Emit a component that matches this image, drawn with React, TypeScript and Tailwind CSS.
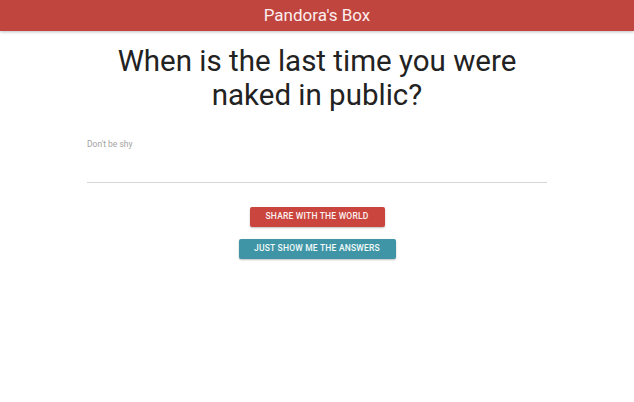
export default function App() {
  return (
    <div className="min-h-screen bg-white font-['Roboto',sans-serif]">
      <header className="flex h-[31px] items-center justify-center bg-[#c1453f] shadow-[0_1px_3px_rgba(0,0,0,0.25)]">
        <h1 className="text-[17px] text-[#fbeeee]">Pandora's Box</h1>
      </header>

      <main className="mx-auto flex w-[460px] flex-col items-center">
        <h2 className="mt-[13px] w-[440px] text-center text-[29.5px] leading-[34px] text-[#222]">
          When is the last time you were naked in public?
        </h2>

        <div className="mt-[26px] w-full">
          <label className="block text-[8.5px] text-[#a3a3a3]">Don't be shy</label>
          <input
            type="text"
            className="mt-[24px] block h-[8px] w-full border-b border-[#d5d5d5] outline-none"
          />
        </div>

        <div className="mt-[24px] flex flex-col items-center gap-[12px]">
          <button
            type="button"
            className="h-[20px] w-[135px] rounded-[2px] bg-[#c9453e] text-[8.5px] font-medium uppercase tracking-[0.2px] text-[#fdf2f2] shadow-[0_1px_2px_rgba(0,0,0,0.25)]"
          >
            Share with the world
          </button>
          <button
            type="button"
            className="h-[20px] w-[157px] rounded-[2px] bg-[#3f95a5] text-[8.5px] font-medium uppercase tracking-[0.2px] text-[#f2fafb] shadow-[0_1px_2px_rgba(0,0,0,0.25)]"
          >
            Just show me the answers
          </button>
        </div>
      </main>
    </div>
  );
}
